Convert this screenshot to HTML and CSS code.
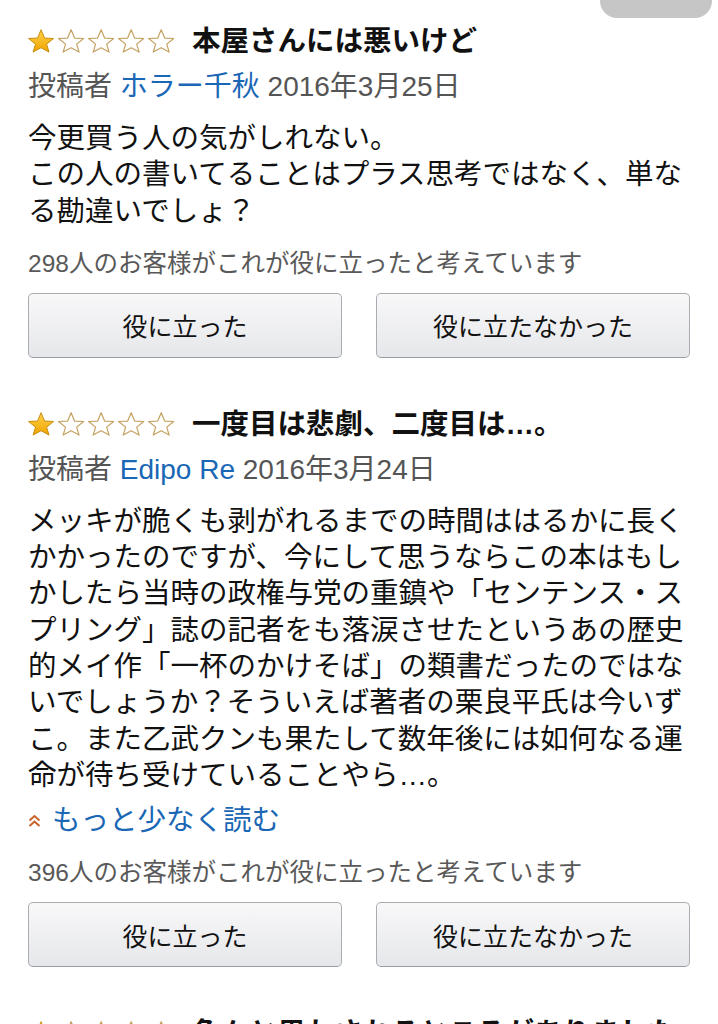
FILE: index.html
```html
<!DOCTYPE html>
<html lang="ja">
<head>
<meta charset="utf-8">
<title>レビュー</title>
<link rel="stylesheet" href="styles.css">
</head>
<body>
<div class="pill"></div>
<main class="page">
  <section class="review">
    <div class="header">
      <svg class="stars" viewBox="0 0 136 22" width="148" height="24" aria-label="5つ星のうち1.0">
        <defs>
          <linearGradient id="gold" x1="0" y1="0" x2="0" y2="1">
            <stop offset="0" stop-color="#ffd24a"/>
            <stop offset="1" stop-color="#f0a300"/>
          </linearGradient>
          <polygon id="star" points="12,0.6 15.2,8.3 23.5,8.7 17.1,13.9 19.3,21.2 12,17.2 4.7,21.2 6.9,13.9 0.5,8.7 8.8,8.3"/>
        </defs>
        <use href="#star" class="full" x="0"/>
        <use href="#star" class="empty" x="27.6"/>
        <use href="#star" class="empty" x="55.2"/>
        <use href="#star" class="empty" x="82.8"/>
        <use href="#star" class="empty" x="110.4"/>
      </svg>
      <h2 class="title">本屋さんには悪いけど</h2>
    </div>
    <p class="meta">投稿者 <a class="author">ホラー千秋</a> 2016年3月25日</p>
    <p class="body">今更買う人の気がしれない。<br>この人の書いてることはプラス思考ではなく、単なる勘違いでしょ？</p>
    <p class="helpful">298人のお客様がこれが役に立ったと考えています</p>
    <div class="buttons">
      <button class="btn">役に立った</button>
      <button class="btn">役に立たなかった</button>
    </div>
  </section>

  <section class="review">
    <div class="header">
      <svg class="stars" viewBox="0 0 136 22" width="148" height="24" aria-label="5つ星のうち1.0">
        <use href="#star" class="full" x="0"/>
        <use href="#star" class="empty" x="27.6"/>
        <use href="#star" class="empty" x="55.2"/>
        <use href="#star" class="empty" x="82.8"/>
        <use href="#star" class="empty" x="110.4"/>
      </svg>
      <h2 class="title">一度目は悲劇、二度目は…。</h2>
    </div>
    <p class="meta">投稿者 <a class="author">Edipo Re</a> 2016年3月24日</p>
    <p class="body">メッキが脆くも剥がれるまでの時間ははるかに長くかかったのですが、今にして思うならこの本はもしかしたら当時の政権与党の重鎮や「センテンス・スプリング」誌の記者をも落涙させたというあの歴史的メイ作「一杯のかけそば」の類書だったのではないでしょうか？そういえば著者の栗良平氏は今いずこ。また乙武クンも果たして数年後には如何なる運命が待ち受けていることやら…。</p>
    <a class="more"><svg class="chev" viewBox="0 0 13 15" width="13" height="15"><polyline points="1.5,7.5 6.5,3 11.5,7.5"/><polyline points="1.5,13 6.5,8.5 11.5,13"/></svg>もっと少なく読む</a>
    <p class="helpful">396人のお客様がこれが役に立ったと考えています</p>
    <div class="buttons">
      <button class="btn">役に立った</button>
      <button class="btn">役に立たなかった</button>
    </div>
  </section>

  <section class="review">
    <div class="header">
      <svg class="stars" viewBox="0 0 136 22" width="148" height="24" aria-label="5つ星のうち1.0">
        <use href="#star" class="full" x="0"/>
        <use href="#star" class="empty" x="27.6"/>
        <use href="#star" class="empty" x="55.2"/>
        <use href="#star" class="empty" x="82.8"/>
        <use href="#star" class="empty" x="110.4"/>
      </svg>
      <h2 class="title">色々と思わされるところがありました</h2>
    </div>
  </section>
</main>
</body>
</html>
```
FILE: styles.css
```css
html, body {
  margin: 0;
  padding: 0;
  background: #ffffff;
}
body {
  font-family: "Liberation Sans", "Noto Sans CJK JP", sans-serif;
  color: #111111;
  overflow: hidden;
}
.pill {
  position: absolute;
  top: 0;
  right: 6px;
  width: 112px;
  height: 18px;
  background: #c6c6c6;
  border-radius: 0 0 17px 17px;
}
.page {
  padding: 23px 28px 0 28px;
  display: flex;
  flex-direction: column;
  gap: 48px;
}
.review {
  display: flex;
  flex-direction: column;
}
.header {
  display: flex;
  align-items: center;
  gap: 16px;
  height: 36px;
}
.stars {
  flex: none;
}
.stars .full {
  fill: url(#gold);
  stroke: #c58c0c;
  stroke-width: 0.9;
  stroke-linejoin: round;
}
.stars .empty {
  fill: #ffffff;
  stroke: #c4a160;
  stroke-width: 1.1;
  stroke-linejoin: round;
}
.title {
  margin: 0;
  font-size: 28.5px;
  line-height: 36px;
  font-weight: bold;
  color: #111111;
  white-space: nowrap;
}
.meta {
  margin: 10px 0 0 0;
  font-size: 28px;
  line-height: 36px;
  color: #555555;
}
.author {
  color: #1a67b5;
}
.body {
  margin: 15px 0 0 0;
  font-size: 28.5px;
  line-height: 36.3px;
  color: #111111;
}
.more {
  margin-top: 9px;
  display: flex;
  align-items: center;
  gap: 11px;
  font-size: 28.5px;
  line-height: 36px;
  color: #1a67b5;
}
.chev {
  flex: none;
  fill: none;
  stroke: #c9622a;
  stroke-width: 2;
}
.helpful {
  margin: 20px 0 0 0;
  font-size: 24.5px;
  line-height: 30px;
  color: #595959;
}
.buttons {
  margin-top: 14px;
  display: grid;
  grid-template-columns: 1fr 1fr;
  gap: 34px;
}
.btn {
  height: 65px;
  font-family: "Liberation Sans", "Noto Sans CJK JP", sans-serif;
  font-size: 25px;
  color: #111111;
  background: linear-gradient(#f8f8f9, #e6e7ea);
  border: 1px solid #a9acb1;
  border-bottom-color: #9a9ea4;
  border-radius: 5px;
  padding: 0;
}
```
